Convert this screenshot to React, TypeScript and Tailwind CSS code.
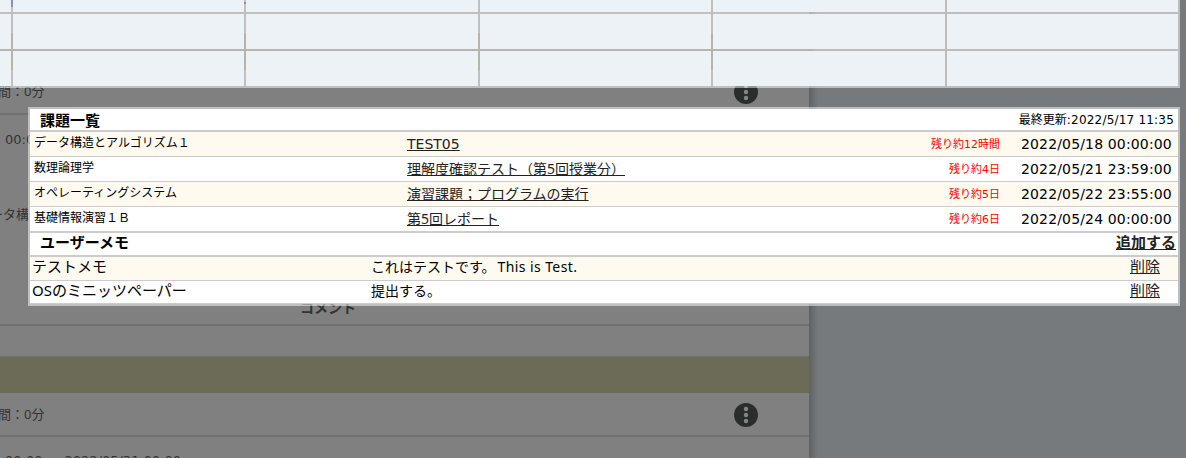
const jp = "font-['Noto_Sans','Noto_Sans_CJK_JP',sans-serif]";
const wide = "font-['DejaVu_Sans','Noto_Sans_CJK_JP',sans-serif]";

const tasks = [
  { course: 'データ構造とアルゴリズム１', title: 'TEST05', left: '残り約12時間', due: '2022/05/18 00:00:00' },
  { course: '数理論理学', title: '理解度確認テスト（第5回授業分）', left: '残り約4日', due: '2022/05/21 23:59:00' },
  { course: 'オペレーティングシステム', title: '演習課題；プログラムの実行', left: '残り約5日', due: '2022/05/22 23:55:00' },
  { course: '基礎情報演習１Ｂ', title: '第5回レポート', left: '残り約6日', due: '2022/05/24 00:00:00' },
];

const memos = [
  { name: 'テストメモ', text: 'これはテストです。', latin: 'This is Test.' },
  { name: 'OSのミニッツペーパー', text: '提出する。', latin: '' },
];

function MenuDots() {
  return (
    <svg width="24" height="24" viewBox="0 0 24 24" className="mt-[2px] shrink-0">
      <circle cx="12" cy="12" r="12" fill="#2b2d2c" />
      <circle cx="12" cy="6" r="2.2" fill="#858585" />
      <circle cx="12" cy="12" r="2.2" fill="#858585" />
      <circle cx="12" cy="18" r="2.2" fill="#858585" />
    </svg>
  );
}

function DurationRow() {
  return (
    <div className="flex h-[42px] shrink-0 items-center justify-between pr-[51px]">
      <span className="-ml-[2px] text-[13px] leading-5">間：0分</span>
      <MenuDots />
    </div>
  );
}

function CoursePage() {
  return (
    <div className="flex h-[458px] w-full bg-[#767a7d] text-[#333]">
      <main className="flex h-full w-[809px] shrink-0 flex-col overflow-hidden bg-[#808080]">
        <div className="flex h-[33px] shrink-0 items-start">
          <span className="ml-[11px] h-[7px] w-[2px] bg-[#1a1a80]" />
          <span className="ml-[231px] mt-[2px] h-[2px] w-[2px] bg-[#1a1a80]" />
        </div>
        <div className="h-[37px] shrink-0 bg-[#6b6b58]" />
        <div className="h-[43px] shrink-0"><DurationRow /></div>
        <div className="flex h-[213px] shrink-0 flex-col border-y-2 border-[#707070] text-[13px]">
          <div className={`ml-[5px] mt-[15px] leading-5 ${wide}`}>00:00</div>
          <div className="-ml-[23px] mt-[54px] leading-5">データ構</div>
          <div className="ml-[300px] mt-[74px] text-[14px] font-bold leading-5">コメント</div>
        </div>
        <div className="h-[30px] shrink-0" />
        <div className="h-[37px] shrink-0 border-t border-[#70706a] bg-[#6b6b58]" />
        <DurationRow />
        <div className={`shrink-0 whitespace-pre border-t-2 border-[#707070] pl-[5px] pt-[14px] text-[13px] leading-5 ${wide}`}>
          00:00<span className="ml-[22px]">2022/05/31 00:00</span>
        </div>
      </main>
      <div className="h-full w-[9px] bg-linear-to-r from-[#606161] to-[#767a7d]" />
    </div>
  );
}

function Timetable() {
  const rows = ['h-[14px]', 'h-[37px]', 'h-[37px]'];
  const cols = ['w-[13px]', 'w-[233px]', 'w-[234px]', 'w-[233px]', 'w-[234px]', 'w-[233px]'];
  return (
    <div className="absolute left-0 top-0 flex w-[1180px] flex-col">
      {rows.map((r, i) => (
        <div key={i} className={`flex ${r}`}>
          {cols.map((c, j) => (
            <div key={j} className={`${c} h-full border-b-2 border-r-2 border-white/50 bg-[#ecf2f6] bg-clip-padding`} />
          ))}
        </div>
      ))}
    </div>
  );
}

function TaskPanel() {
  return (
    <section className="absolute left-[28px] top-[107px] w-[1152px] border-2 border-white/50 bg-clip-padding text-black">
      <div className="bg-white">
        <header className="flex h-[23px] items-center justify-between border-b-2 border-[#ccc] pl-[10px] pr-[4px]">
          <h2 className="text-[15px] font-bold leading-5">課題一覧</h2>
          <span className="text-[12px] leading-5">
            最終更新<span className={`tracking-[0.2px] ${wide}`}>:2022/5/17 11:35</span>
          </span>
        </header>
        {tasks.map((t, i) => (
          <div
            key={t.course}
            className={`flex items-center border-[#ccc] ${i === 3 ? 'h-[26px] border-b-2' : 'h-[25px] border-b'} ${i % 2 === 0 ? 'bg-[#fffaf0]' : 'bg-white'}`}
          >
            <span className="w-[373px] pb-[3px] pl-[4px] text-[12px] leading-5">{t.course}</span>
            <span className="w-[400px] pl-[4px] text-[14px] leading-5">
              <a className={`text-[#222] underline ${i === 0 ? wide : jp}`}>{t.title}</a>
            </span>
            <span className={`ml-auto pt-[2px] text-[11px] leading-5 text-[#ff0000] ${wide}`}>{t.left}</span>
            <span className={`ml-[21px] w-[157px] whitespace-nowrap text-[14px] leading-5 tracking-[0.15px] ${wide}`}>{t.due}</span>
          </div>
        ))}
        <header className="flex h-[24px] items-center justify-between border-b-2 border-[#ccc] pb-[4px] pl-[10px] pr-[2px] text-[15px] font-bold leading-5">
          <h2>ユーザーメモ</h2>
          <a className="text-[#222] underline">追加する</a>
        </header>
        {memos.map((m, i) => (
          <div
            key={m.name}
            className={`flex items-center border-b border-[#ccc] ${i === 0 ? 'h-[24px] bg-[#fffaf0]' : 'h-[23px] bg-white'}`}
          >
            <span className={`w-[341px] pl-[2px] text-[15px] leading-5 ${i === 0 ? 'pb-[5px]' : 'pb-[4px]'}`}>{m.name}</span>
            <span className="pb-[3px] text-[14px] leading-5">
              {m.text}
              <span className="ml-[2px] tracking-[0.4px]">{m.latin}</span>
            </span>
            <a className={`ml-auto mr-[18px] text-[15px] leading-5 text-[#222] underline ${i === 0 ? 'pb-[5px]' : 'pb-[4px]'}`}>削除</a>
          </div>
        ))}
      </div>
    </section>
  );
}

export default function App() {
  return (
    <div className={`relative h-[458px] w-[1186px] overflow-hidden ${jp}`}>
      <CoursePage />
      <Timetable />
      <TaskPanel />
    </div>
  );
}
